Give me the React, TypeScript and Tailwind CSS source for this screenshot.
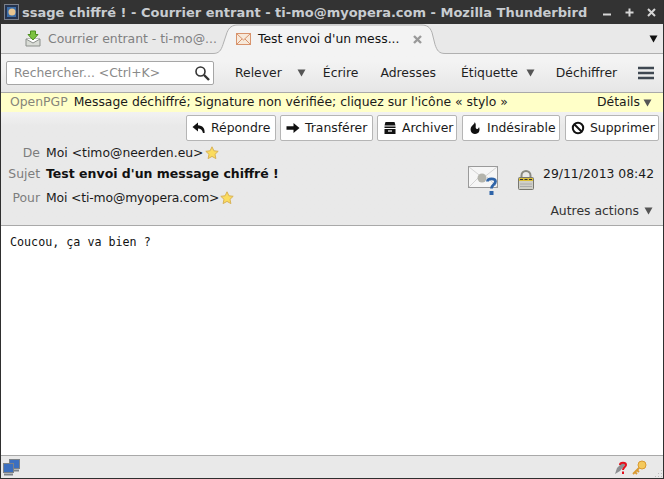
import React from 'react';

const Star = () => (
  <svg width="14" height="14" viewBox="0 0 14 14" className="shrink-0">
    <path d="M7 .8l1.900 4 4.300.5-3.200 3 .9 4.300L7 10.400l-3.900 2.200.9-4.300-3.200-3 4.300-.5z" fill="#fbdc5e" stroke="#d8b257" strokeWidth="1" />
  </svg>
);

const Caret = ({ color = '#555' }: { color?: string }) => (
  <svg width="9" height="8" viewBox="0 0 9 8" className="shrink-0">
    <path d="M.5 .5h8L4.500 7.500z" fill={color} />
  </svg>
);

const ActionButton = ({ icon, label, width }: { icon: React.ReactNode; label: string; width: string }) => (
  <div className={`flex h-[26px] items-center gap-[5px] rounded-[2px] border border-[#b5b5b5] bg-white pl-[5px] ${width}`}>
    {icon}
    <span className="whitespace-nowrap text-[#1a1a1a]">{label}</span>
  </div>
);

const ReplyIcon = (
  <svg width="14" height="14" viewBox="0 0 14 14"><path d="M6 1.500L.5 6 6 10.500V7.600c2.600 0 4 1 5 4.400h1.600c.4-4.800-2-7.600-6.600-7.800z" fill="#111" /></svg>
);
const ForwardIcon = (
  <svg width="14" height="14" viewBox="0 0 14 14"><path d="M.5 5.300h7V2l6 5-6 5V8.700h-7z" fill="#111" /></svg>
);
const ArchiveIcon = (
  <svg width="14" height="14" viewBox="0 0 14 14"><path d="M2.500 1h9l1 3.500h-11zM1.500 5.500h11V7h-11zM1.500 8h11v5h-11z" fill="#111" /><path d="M5 10h4" stroke="#fff" strokeWidth="1.200" /></svg>
);
const FlameIcon = (
  <svg width="14" height="14" viewBox="0 0 14 14"><path d="M6.500 1C7 3 4.700 3.600 3.200 6 1.700 8.600 3 13 7 13s5.400-3.800 4-7C10.500 7.500 9.800 8 9 8c-.9 0-1.500-1-1.300-2.500C7.900 4 7.800 2 6.500 1z" fill="#111" /></svg>
);
const BlockIcon = (
  <svg width="14" height="14" viewBox="0 0 14 14"><circle cx="7" cy="7" r="5.200" fill="none" stroke="#111" strokeWidth="2" /><path d="M3.500 3.500l7 7" stroke="#111" strokeWidth="2" /></svg>
);

export default function App() {
  return (
    <div className="flex h-[479px] w-[664px] flex-col overflow-hidden border-x border-b border-[#2f2f2f] bg-[#e9e9e9] text-[12.4px] leading-none" style={{ fontFamily: '"DejaVu Sans", sans-serif' }}>
      {/* title bar */}
      <div className="-mx-px flex h-[24px] shrink-0 items-center bg-[#333333] pl-[4px] pr-[8px] text-[#c8ccd0]">
        <svg width="15" height="16" viewBox="0 0 15 16" className="shrink-0">
          <rect x=".5" y=".5" width="14" height="15" fill="#26344f" stroke="#c9ced6" strokeDasharray="1 1" />
          <rect x="3" y="3" width="9" height="10" fill="#3c6ea8" />
          <circle cx="8" cy="8" r="3.500" fill="#e8c48f" />
        </svg>
        <span className="ml-[3px] flex-1 whitespace-nowrap text-[13px] font-bold">ssage chiffré ! - Courrier entrant - ti-mo@myopera.com - Mozilla Thunderbird</span>
        <div className="flex items-center gap-[13px] text-[#d6d6d6]">
          <svg width="9" height="9" viewBox="0 0 9 9"><path d="M0 6.500h8" stroke="currentColor" strokeWidth="2" /></svg>
          <svg width="9" height="9" viewBox="0 0 9 9"><path d="M4.500 .5v8M.5 4.500h8" stroke="currentColor" strokeWidth="2" /></svg>
          <svg width="9" height="9" viewBox="0 0 9 9"><path d="M1 1l7 7M8 1L1 8" stroke="currentColor" strokeWidth="2" /></svg>
        </div>
      </div>

      {/* tabs */}
      <div className="relative flex h-[30px] shrink-0 items-center bg-[#e9e9e9]">
        <svg width="662" height="30" viewBox="0 0 662 30" className="absolute left-0 top-0">
          <path d="M0 29.500H212c6 0 8-3 10-9l4-12c2-5 5-7.500 11-7.500H420c6 0 9 2 11 7.500l3 12c2 6 4 9 10 9H662V30H0z" fill="#f3f3f3" stroke="none" />
          <path d="M0 29.500H212c6 0 8-3 10-9l4-12c2-5 5-7.500 11-7.500H420c6 0 9 2 11 7.500l3 12c2 6 4 9 10 9H662" fill="none" stroke="#b0b0b0" />
        </svg>
        <div className="relative flex w-[224px] items-center pl-[23px] text-[#7f8081]">
          <svg width="18" height="18" viewBox="0 0 18 18" className="shrink-0">
            <path d="M2 9h14v7H2z" fill="#d9dcd6" stroke="#8b8f8b" />
            <path d="M2 9l7 4 7-4" fill="#fff" stroke="#8b8f8b" />
            <path d="M6.500 1h5v3.500H14L9 10 4 4.500h2.500z" fill="#7cc240" stroke="#4d8f1f" />
          </svg>
          <span className="ml-[6px] whitespace-nowrap">Courrier entrant - ti-mo@...</span>
        </div>
        <div className="relative flex w-[214px] items-center pl-[11px] text-[#111]">
          <svg width="15" height="12" viewBox="0 0 15 12" className="shrink-0">
            <rect x=".5" y=".5" width="14" height="11" fill="#f7e9da" stroke="#d8936c" />
            <path d="M1 1l6.500 6L14 1M1 11l5-5M14 11L9 6" fill="none" stroke="#d8936c" />
          </svg>
          <span className="ml-[7px] whitespace-nowrap">Test envoi d'un mess...</span>
          <svg width="9" height="9" viewBox="0 0 9 9" className="ml-[14px]"><path d="M1 1l7 7M8 1L1 8" stroke="#999" strokeWidth="2.400" /></svg>
        </div>
        <div className="relative ml-auto flex items-center pr-[5px]">
          <Caret color="#111" />
        </div>
      </div>

      {/* toolbar */}
      <div className="flex h-[39px] shrink-0 items-center border-b border-[#a9a9a9] bg-gradient-to-b from-[#f3f3f3] from-[20%] to-[#e6e6e6] pl-[5px] text-[#1f1f1f]">
        <div className="flex h-[24px] w-[208px] shrink-0 items-center justify-between rounded-[2px] border border-[#a6a6a6] bg-white pl-[7px] pr-[3px] text-[#8a8a8a]">
          <span className="whitespace-nowrap">Rechercher... &lt;Ctrl+K&gt;</span>
          <svg width="16" height="16" viewBox="0 0 16 16" className="shrink-0"><circle cx="6.500" cy="6.500" r="4.500" fill="#fff" stroke="#333" strokeWidth="1.600" /><path d="M10 10l5 5" stroke="#333" strokeWidth="2.400" /></svg>
        </div>
        <span className="ml-[21px]">Relever</span>
        <span className="ml-[15px]"><Caret /></span>
        <span className="ml-[17px]">Écrire</span>
        <span className="ml-[22px]">Adresses</span>
        <span className="ml-[25px]">Étiquette</span>
        <span className="ml-[8px]"><Caret /></span>
        <span className="ml-[21px]">Déchiffrer</span>
        <svg width="16" height="14" viewBox="0 0 16 14" className="ml-[21px]"><path d="M0 2h16M0 7h16M0 12h16" stroke="#3f4852" strokeWidth="2.400" /></svg>
      </div>

      {/* notification */}
      <div className="flex h-[19px] shrink-0 items-center bg-[#ffffc8] pl-[9px] pr-[11px] text-[#1a1a1a]">
        <span className="text-[#85857a]">OpenPGP</span>
        <span className="ml-[6px] whitespace-nowrap">Message déchiffré; Signature non vérifiée; cliquez sur l'icône « stylo »</span>
        <span className="ml-auto">Détails</span>
        <span className="ml-[3px]"><Caret /></span>
      </div>

      {/* header pane */}
      <div className="flex h-[114px] shrink-0 flex-col border-b border-[#a9a9a9] bg-gradient-to-b from-[#f2f2f2] from-0% to-[#e9e9e9] to-[14px] pt-[3px]">
        <div className="flex justify-end gap-[4px] pr-[4px]">
          <ActionButton icon={ReplyIcon} label="Répondre" width="w-[90px]" />
          <ActionButton icon={ForwardIcon} label="Transférer" width="w-[93px]" />
          <ActionButton icon={ArchiveIcon} label="Archiver" width="w-[80px]" />
          <ActionButton icon={FlameIcon} label="Indésirable" width="ml-[1px] w-[98px]" />
          <ActionButton icon={BlockIcon} label="Supprimer" width="ml-[1px] w-[94px]" />
        </div>
        <div className="flex flex-1">
          <div className="flex flex-1 flex-col pt-[3px]">
            <div className="flex h-[19px] items-center">
              <span className="w-[39px] text-right text-[#7d7d7d]">De</span>
              <span className="ml-[6px] whitespace-nowrap text-[#1a1a1a]">Moi &lt;timo@neerden.eu&gt;</span>
              <span className="-mt-[2px] ml-[1px]"><Star /></span>
            </div>
            <div className="mt-[2px] flex h-[19px] items-center">
              <span className="w-[39px] text-right text-[#7d7d7d]">Sujet</span>
              <span className="ml-[6px] whitespace-nowrap text-[12.5px] font-bold text-[#111]">Test envoi d'un message chiffré !</span>
            </div>
            <div className="mt-[5px] flex h-[19px] items-center">
              <span className="w-[39px] text-right text-[#7d7d7d]">Pour</span>
              <span className="ml-[6px] whitespace-nowrap tracking-[-0.15px] text-[#1a1a1a]">Moi &lt;ti-mo@myopera.com&gt;</span>
              <span className="-mt-[2px] ml-[1px]"><Star /></span>
            </div>
          </div>
          <div className="flex w-[195px] flex-col pr-[10px] pt-[25px]">
            <div className="flex items-start">
              <svg width="30" height="29" viewBox="0 0 30 29" className="shrink-0">
                <rect x=".5" y=".5" width="29" height="21" fill="#f6f6f6" stroke="#9a9a9a" />
                <path d="M1 1l14 11L29 1M1 21l10-10M29 21L19 11" fill="none" stroke="#d4d4d4" />
                <circle cx="14" cy="12" r="4.500" fill="#b4b4ac" />
                <path d="M19.500 15.500c0-3.500 8-3.500 8 0 0 3-4 3-4 7" fill="none" stroke="#2f64a8" strokeWidth="2.800" />
                <rect x="21.500" y="25" width="4" height="4" fill="#2f64a8" />
              </svg>
              <svg width="16" height="20" viewBox="0 0 16 20" className="ml-[20px] mt-[4px] shrink-0">
                <path d="M3.500 9V5.500a4.500 4.500 0 0 1 9 0V9" fill="none" stroke="#8a8a82" strokeWidth="2" />
                <rect x=".5" y="7.500" width="15" height="12" rx="1" fill="#cfcfc8" stroke="#77776f" />
                <path d="M1 8h14v3H1z" fill="#dcc03a" />
                <path d="M2 9.500h3M6.500 9.500h3M11 9.500h3" stroke="#333" />
                <path d="M2 14h12M2 16.500h12" stroke="#aaa" />
              </svg>
              <span className="ml-[9px] whitespace-nowrap pt-[2px] text-[#1a1a1a]">29/11/2013 08:42</span>
            </div>
            <div className="mt-[10px] flex items-center justify-end gap-[5px] text-[#333]">
              <span>Autres actions</span>
              <Caret />
            </div>
          </div>
        </div>
      </div>

      {/* message body */}
      <div className="flex-1 bg-white pl-[9px] pt-[11px] text-[11.7px] text-[#111]" style={{ fontFamily: '"DejaVu Sans Mono", monospace' }}>
        Coucou, ça va bien ?
      </div>

      {/* status bar */}
      <div className="relative flex h-[23px] shrink-0 items-center justify-between border-t border-[#a9a9a9] bg-[#e9e9e9] pl-[2px] pr-[15px]">
        <svg width="17" height="17" viewBox="0 0 17 17">
          <rect x="6.500" y=".5" width="10" height="9" fill="#3b6fc0" stroke="#7c8288" />
          <path d="M8 11.500h8" stroke="#7c8288" strokeWidth="2" />
          <rect x=".5" y="4.500" width="10" height="9" fill="#3b6fc0" stroke="#7c8288" />
          <path d="M1 15.500h9" stroke="#7c8288" strokeWidth="2" />
        </svg>
        <div className="flex items-center gap-[3px]">
          <svg width="14" height="15" viewBox="0 0 14 15">
            <path d="M1 14l2-6 6-6 3 2-6 7z" fill="#8d8f92" />
            <path d="M6 5c0-3 6-3 6 0 0 2-3 2-3 5M9 11.500V14" fill="none" stroke="#e3101c" strokeWidth="2" />
          </svg>
          <svg width="17" height="17" viewBox="0 0 17 17">
            <circle cx="11" cy="6" r="4" fill="#f4c95d" stroke="#d99a32" />
            <path d="M8 9l-6 6M4 13l2 2M6 11l2 2" stroke="#d99a32" strokeWidth="1.800" />
          </svg>
        </div>
        <svg width="10" height="10" viewBox="0 0 10 10" className="absolute bottom-0 right-0">
          <path d="M8 2h1v1H8zM5 5h1v1H5zM8 5h1v1H8zM2 8h1v1H2zM5 8h1v1H5zM8 8h1v1H8z" fill="#bdbdbd" />
        </svg>
      </div>
    </div>
  );
}
